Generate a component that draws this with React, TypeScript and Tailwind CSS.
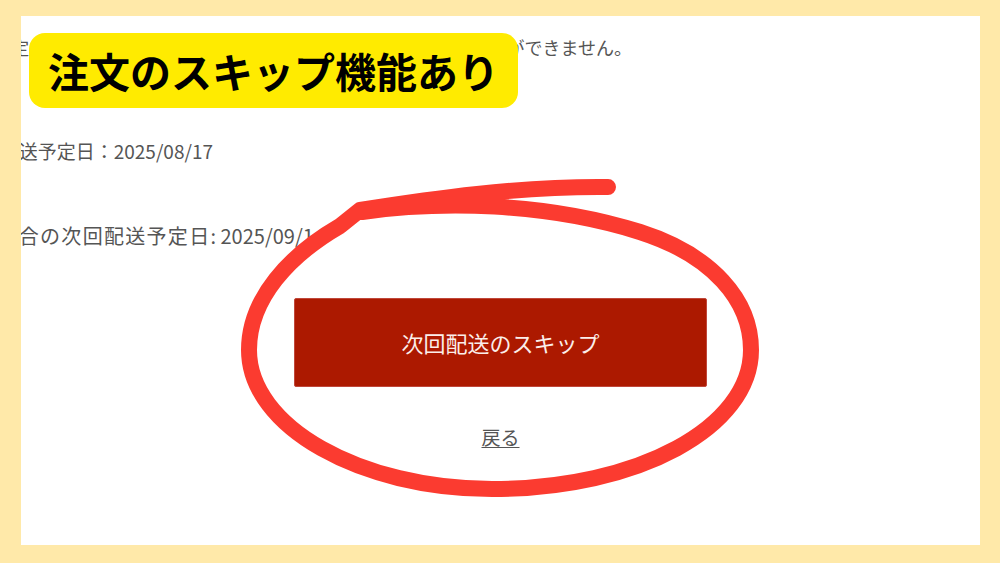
import React from "react";

const JP = { fontFamily: '"Noto Sans CJK JP", sans-serif' };

const SkipLoop = () => (
  <svg
    className="absolute inset-0 pointer-events-none"
    width="1000"
    height="563"
    viewBox="0 0 1000 563"
  >
    <path
      d="M 362 212 C 440 201, 545 202, 640 232 C 712 255, 751 300, 751 350 C 751 427, 639 489, 492 489 C 361 489, 249 427, 249 350 C 249 298, 290 255, 340 226 L 360 210 C 430 199, 520 186, 608 187"
      fill="none"
      stroke="#fb3b30"
      strokeWidth="16"
      strokeLinecap="round"
      strokeLinejoin="round"
    />
  </svg>
);

const App = () => {
  return (
    <div className="relative w-[1000px] h-[563px] bg-[#ffe9a9] pt-[16px] pl-[21px]">
      <div
        className="relative w-[959px] h-[529px] bg-white overflow-hidden flex flex-col text-[#555]"
        style={JP}
      >
        {/* text is cut off at the left edge of the shot */}
        <div className="mt-[17px] w-[611px] flex justify-end h-[28px] leading-[28px]">
          <span className="shrink-0 whitespace-nowrap text-[18px]">
            お届け予定日の5日前を過ぎますと、次回配送のスキップや日付の変更ができません。
          </span>
        </div>

        <div className="mt-[76px] w-[192px] flex justify-end h-[28px] leading-[28px]">
          <span className="shrink-0 whitespace-nowrap text-[19px]">
            次回配送予定日：2025/08/17
          </span>
        </div>

        <div className="mt-[57px] w-[304px] flex justify-end h-[28px] leading-[28px]">
          <span className="shrink-0 whitespace-nowrap text-[20px]">
            <span className="tracking-[1.3px]">スキップした場合の次回配送予定日</span>: 2025/09/14
          </span>
        </div>

        <button className="mt-[48px] self-center w-[413px] h-[89px] shrink-0 bg-[#ac1900] rounded-[2px] border border-[#c0473a] text-[22px] text-[#fbeeea]">
          次回配送のスキップ
        </button>

        <a className="mt-[36px] self-center text-[19px] leading-[28px] underline underline-offset-2 text-[#555]">
          戻る
        </a>

        <div className="absolute left-[8px] top-[17px] w-[489px] h-[75px] rounded-[16px] bg-[#ffeb00] flex items-center justify-center">
          <span className="text-[41px] font-bold text-black leading-none">
            注文のスキップ機能あり
          </span>
        </div>
      </div>

      <SkipLoop />
    </div>
  );
};

export default App;
